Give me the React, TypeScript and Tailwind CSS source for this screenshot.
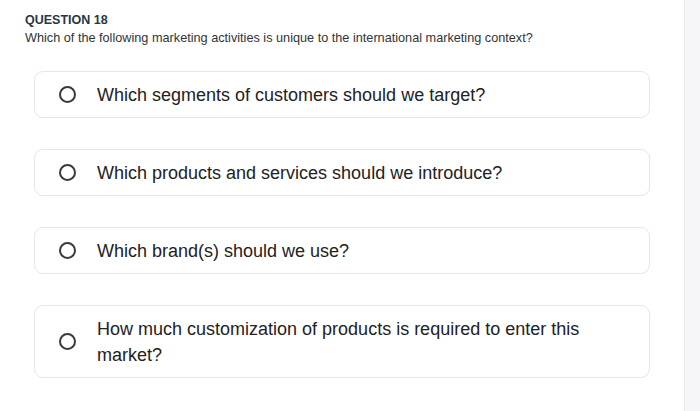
import React from "react";

const options = [
    "Which segments of customers should we target?",
    "Which products and services should we introduce?",
    "Which brand(s) should we use?",
    "How much customization of products is required to enter this market?",
];

function Option({text}: {text: string}) {
    return (
        <div className="w-[616px] min-h-[47px] flex flex-row items-center rounded-[9px] border border-[#e6e6e6] bg-white pl-[24px] pr-[40px] py-[9.5px]">
            <span className="shrink-0 w-[17px] h-[17px] rounded-full border-2 border-[#3a3a3a]"/>
            <p className="ml-[21px] text-[18px] leading-[26px] text-[#222]">{text}</p>
        </div>
    );
}

export default function App() {
    return (
        <div className="w-[700px] h-[411px] flex flex-row bg-white overflow-hidden" style={{fontFamily: '"Liberation Sans", Arial, sans-serif'}}>
            <div className="w-[684px] flex flex-col px-[25px] pt-[12px]">
                <h1 className="text-[12.5px] leading-[16px] font-bold text-[#263843]">QUESTION 18</h1>
                <p className="mt-[2px] text-[12.7px] leading-[16px] text-[#333]">
                    Which of the following marketing activities is unique to the international marketing context?
                </p>
                <div className="mt-[25px] ml-[9px] flex flex-col gap-[31px]">
                    {options.map((o, i) => (
                        <Option text={o} key={i}/>
                    ))}
                </div>
            </div>
            <div className="flex-1 bg-[#f5f5fa] border-l border-[#e9e9ef]"/>
        </div>
    );
}
